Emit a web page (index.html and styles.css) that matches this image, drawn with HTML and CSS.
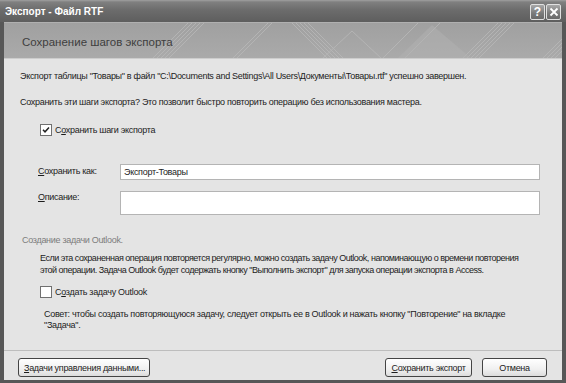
FILE: index.html
```html
<!DOCTYPE html>
<html lang="ru">
<head>
<meta charset="utf-8">
<link rel="stylesheet" href="styles.css">
</head>
<body>
<div class="window">
  <div class="titlebar">
    <span class="title">Экспорт - Файл RTF</span>
    <div class="tbuttons">
      <span class="tbtn">?</span>
      <span class="tbtn">
        <svg width="10" height="10" viewBox="0 0 10 10"><path d="M1.5 1.5 L8.5 8.5 M8.5 1.5 L1.5 8.5" stroke="#fff" stroke-width="1.8" fill="none"/></svg>
      </span>
    </div>
  </div>
  <div class="frame">
    <div class="header">
      <span class="header-text">Сохранение шагов экспорта</span>
      <svg class="pattern" width="420" height="36" viewBox="0 0 420 36">
        <g stroke="#bababa" stroke-width="1" fill="none" opacity="0.75">
          <path d="M10 36 L46 0 M14 36 L50 0 M18 36 L54 0 M22 36 L58 0 M26 36 L62 0"/>
          <path d="M90 36 L126 0 M94 36 L130 0"/>
          <path d="M150 0 L186 36 M154 0 L190 36 M158 0 L194 36 M162 0 L198 36 M166 0 L202 36"/>
          <path d="M180 36 L210 8 L240 36"/>
          <path d="M240 36 L276 0 M262 36 L298 0"/>
          <path d="M320 36 L356 0 M324 36 L360 0 M328 36 L364 0 M332 36 L368 0 M336 36 L372 0"/>
          <path d="M400 36 L420 16 M404 36 L420 20 M408 36 L420 24 M412 36 L420 28"/>
        </g>
        <path d="M255 36 L290 2 L330 36 Z" fill="#b2b2b2" opacity="0.5"/>
      </svg>
    </div>
    <div class="content">
      <p class="msg">Экспорт таблицы "Товары" в файл "C:\Documents and Settings\All Users\Документы\Товары.rtf" успешно завершен.</p>
      <p class="msg q">Сохранить эти шаги экспорта? Это позволит быстро повторить операцию без использования мастера.</p>
      <label class="check first">
        <span class="box">
          <svg width="8" height="8" viewBox="0 0 8 8"><path d="M1 3.8 L3 5.8 L7 1.5" stroke="#222" stroke-width="1.5" fill="none"/></svg>
        </span>
        <span>С<u>о</u>хранить шаги экспорта</span>
      </label>
      <div class="form">
        <div class="row">
          <span class="lbl"><u>С</u>охранить как:</span>
          <div class="input">Экспорт-Товары</div>
        </div>
        <div class="row">
          <span class="lbl l2"><u>О</u>писание:</span>
          <div class="input tall"></div>
        </div>
      </div>
      <div class="section">Создание задачи Outlook.</div>
      <p class="para">Если эта сохраненная операция повторяется регулярно, можно создать задачу Outlook, напоминающую о времени повторения<br>этой операции. Задача Outlook будет содержать кнопку "Выполнить экспорт" для запуска операции экспорта в Access.</p>
      <label class="check second">
        <span class="box"></span>
        <span>С<u>о</u>здать задачу Outlook</span>
      </label>
      <p class="para tip">Совет: чтобы создать повторяющуюся задачу, следует открыть ее в Outlook и нажать кнопку "Повторение" на вкладке<br>"Задача".</p>
    </div>
    <div class="footer">
      <button class="btn wide"><u>З</u>адачи управления данными...</button>
      <div class="spacer"></div>
      <button class="btn save"><u>С</u>охранить экспорт</button>
      <button class="btn cancel">Отмена</button>
    </div>
  </div>
</div>
</body>
</html>
```
FILE: styles.css
```css
* { box-sizing: border-box; }
html, body { margin: 0; padding: 0; }
body {
  width: 566px;
  height: 383px;
  background: #4a4a4a;
  font-family: "Liberation Sans", Arial, sans-serif;
  overflow: hidden;
}
.window {
  width: 566px;
  height: 383px;
  display: flex;
  flex-direction: column;
  background: #575757;
}
.titlebar {
  height: 22px;
  display: flex;
  align-items: flex-start;
  justify-content: space-between;
  padding: 0 5px 0 5px;
  background: linear-gradient(#a0a0a0 0px, #808080 2px, #6c6c6c 10px, #5e5e5e 22px);
}
.title {
  color: #fff;
  font-family: "Liberation Sans", sans-serif;
  font-weight: bold;
  font-size: 10px;
  line-height: 12px;
  margin-top: 6px;
}
.tbuttons { display: flex; gap: 1px; margin-top: 4px; }
.tbtn {
  width: 15px;
  height: 16px;
  border: 1px solid #e0e0e0;
  border-radius: 2px;
  background: linear-gradient(#a8a8a8, #7a7a7a 60%, #6a6a6a);
  color: #fff;
  font-family: "Liberation Sans", sans-serif;
  font-weight: bold;
  font-size: 12px;
  line-height: 14px;
  display: flex;
  align-items: center;
  justify-content: center;
}
.frame {
  flex: 1;
  display: flex;
  flex-direction: column;
  margin: 0 4px 3px 4px;
  background: #e4e4e4;
  border-top: 1px solid #b0b0b0;
}
.header {
  position: relative;
  height: 36px;
  background: linear-gradient(#a0a0a0, #aaaaaa);
  border-bottom: 1px solid #cdcdcd;
  display: flex;
  align-items: center;
  padding-left: 18px;
  overflow: hidden;
}
.header-text {
  position: relative;
  z-index: 1;
  font-family: "Liberation Sans", sans-serif;
  font-size: 11.5px;
  color: #3e3e3e;
  margin-top: 2px;
}
.pattern {
  position: absolute;
  right: 0;
  top: 0;
}
.content {
  flex: 1;
  padding: 0 16px;
  font-size: 9px;
  color: #1c1c1c;
  letter-spacing: -0.3px;
  white-space: nowrap;
}
p { margin: 0; }
.msg { margin-top: 11px; line-height: 12px; }
.msg.q { margin-top: 14px; }
.check {
  display: flex;
  align-items: center;
  gap: 3px;
  margin-left: 20px;
  height: 13px;
  line-height: 12px;
}
.check.first { margin-top: 15px; }
.box {
  width: 12px;
  height: 12px;
  border: 1px solid #707070;
  background: #fff;
  display: flex;
  align-items: center;
  justify-content: center;
}
.form {
  margin-top: 28px;
  display: flex;
  flex-direction: column;
  gap: 11px;
}
.row {
  display: flex;
  align-items: flex-start;
}
.lbl {
  width: 82px;
  margin-left: 18px;
  padding-top: 1px;
  line-height: 12px;
}
.lbl.l2 { margin-top: -1px; }
.input {
  width: 420px;
  height: 16px;
  background: #fff;
  border: 1px solid #b4b4b4;
  padding: 1px 3px;
  line-height: 12px;
}
.input.tall { height: 24px; }
.section {
  margin-top: 19px;
  margin-left: 2px;
  color: #7c7c7c;
  line-height: 12px;
}
.para {
  margin: 6px 0 0 20px;
  line-height: 12px;
  letter-spacing: -0.48px;
}
.check.second { margin-top: 9px; }
.para.tip { margin: 11px 0 0 24px; line-height: 11px; letter-spacing: -0.3px; }
.footer {
  height: 30px;
  border-top: 1px solid #bdbdbd;
  display: flex;
  align-items: flex-start;
  padding: 7px 15px 0 14px;
  gap: 10px;
}
.spacer { flex: 1; }
.btn {
  height: 19px;
  font-family: "Liberation Sans", sans-serif;
  font-size: 9px;
  letter-spacing: -0.3px;
  white-space: nowrap;
  color: #1c1c1c;
  background: linear-gradient(#ffffff, #f0f0f0 60%, #dcdcdc);
  border: 1px solid #444;
  border-radius: 3px;
  padding: 0 5px;
  text-align: center;
  line-height: 16px;
}
.btn.wide { width: 132px; text-align: left; }
.btn.save { width: 87px; }
.btn.cancel { width: 65px; }
```
